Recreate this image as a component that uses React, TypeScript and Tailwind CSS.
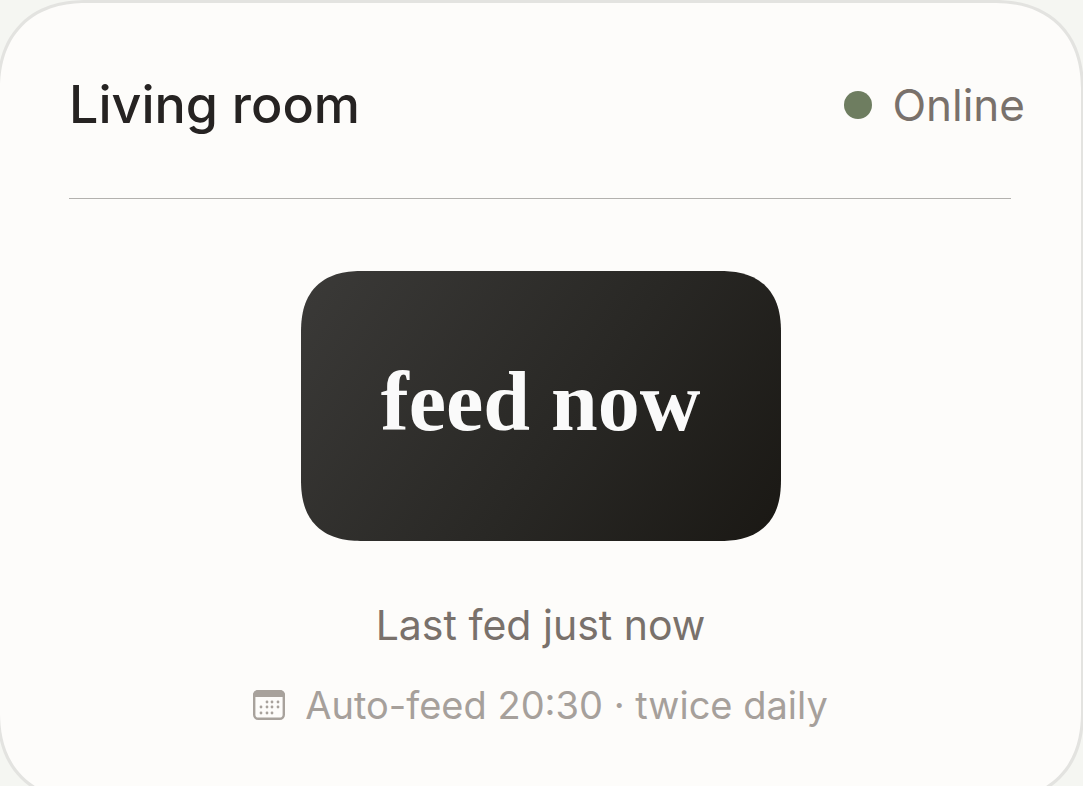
function CalendarIcon() {
  const dots = [
    [14, 12], [19, 12], [25, 12],
    [8, 17], [14, 17], [19, 17], [25, 17],
    [8, 23], [14, 23], [19, 23],
  ];
  return (
    <svg className="h-8 w-8 shrink-0" viewBox="0 0 32 32" aria-hidden="true">
      <rect x="1.2" y="2.2" width="29.6" height="27.6" rx="4" fill="none" stroke="#a8a29c" strokeWidth="2.4" />
      <path d="M0 8V6a5 5 0 0 1 5-5h22a5 5 0 0 1 5 5v2z" fill="#a8a29c" />
      {dots.map(([x, y]) => (
        <circle key={`${x}-${y}`} cx={x} cy={y + 1} r="1.4" fill="#a8a29c" />
      ))}
    </svg>
  );
}

export default function App() {
  return (
    <main className="h-screen overflow-hidden bg-[#f5f6f2] font-['Inter','Liberation_Sans',sans-serif]">
      <section className="-mr-px -ml-[3px] rounded-[80px] border-[3px] border-[#e3e3e0] bg-[#fdfcfa] pb-[70px] supports-[corner-shape:squircle]:rounded-[90px] supports-[corner-shape:squircle]:[corner-shape:superellipse(1.2)]">
        <header className="flex items-center justify-between pt-[70px] pr-14 pl-[69px]">
          <h2 className="text-[52px] leading-[64px] font-medium text-[#262322]">Living room</h2>
          <p className="flex items-center gap-5 text-[44px] leading-[64px] text-[#79716b]">
            <span className="h-7 w-7 rounded-full bg-[#6e7d60]" />
            Online
          </p>
        </header>
        <hr className="mt-[61px] mr-[70px] ml-[69px] border-t border-[#b3b1ae]" />
        <div className="flex flex-col items-center pt-[72px]">
          <button
            type="button"
            className="h-[270px] w-[480px] rounded-[56px] bg-linear-[125deg] from-[#3b3a38] via-[#292825] via-55% to-[#1a1814] pb-2 font-['Liberation_Serif',serif] text-[84px] leading-none font-bold text-[#fafafa] supports-[corner-shape:squircle]:rounded-[62px] supports-[corner-shape:squircle]:[corner-shape:superellipse(1.3)]"
          >
            feed now
          </button>
          <p className="mt-[60px] text-[41px] leading-[48px] text-[#79716b]">Last fed just now</p>
          <p className="mt-8 flex items-center gap-5 text-[38px] leading-[48px] text-[#a6a09b]">
            <CalendarIcon />
            Auto-feed 20:30 · twice daily
          </p>
        </div>
      </section>
    </main>
  );
}
